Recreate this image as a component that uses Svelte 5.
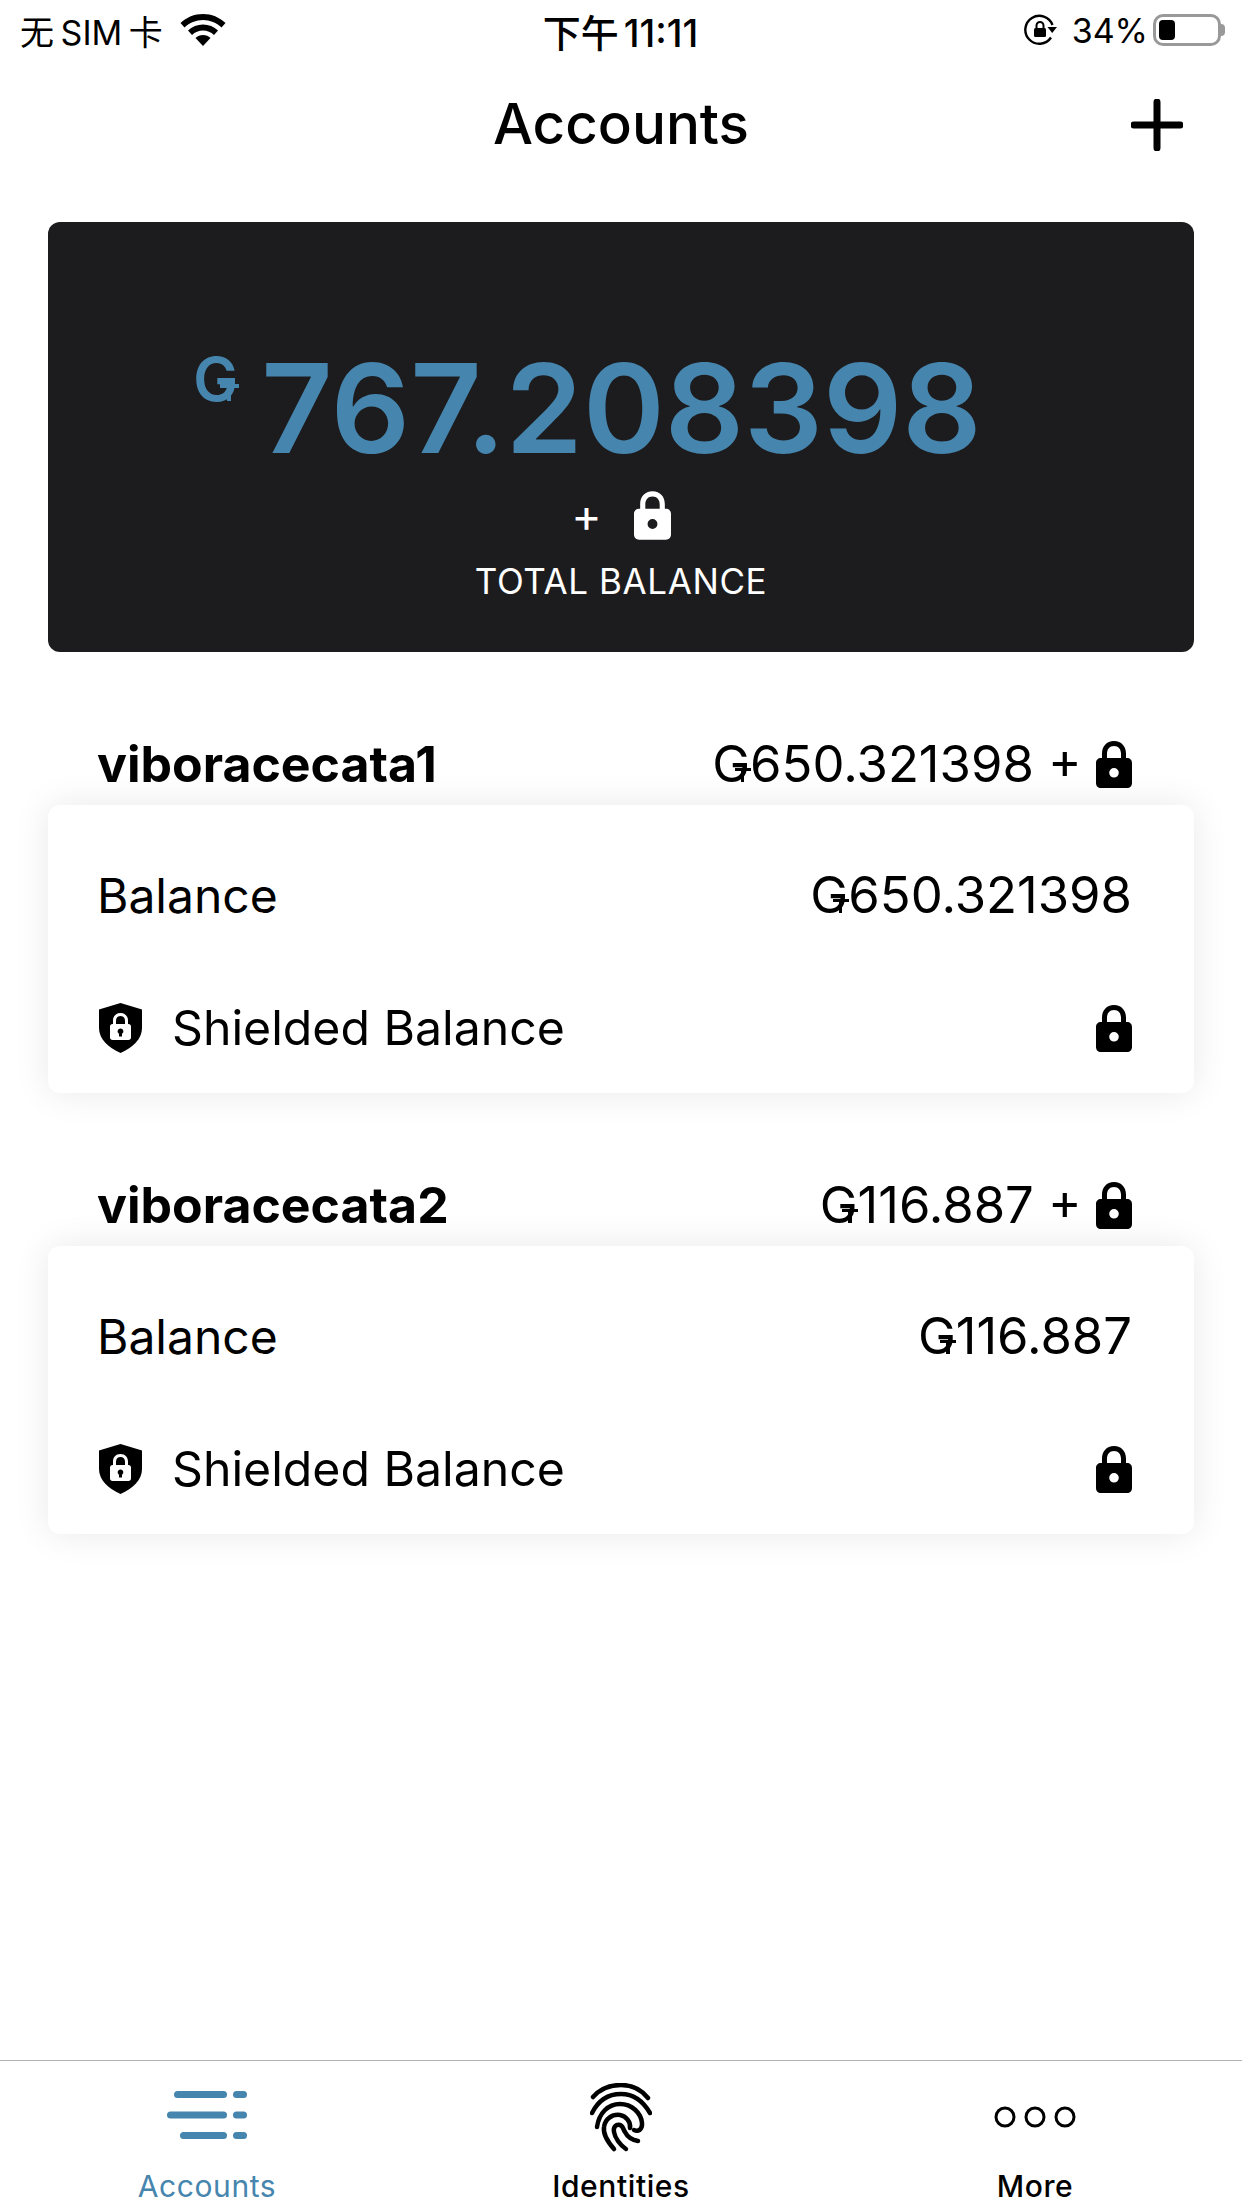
<script lang="ts">
  const accounts = [
    { name: 'viboracecata1', balance: '650.321398' },
    { name: 'viboracecata2', balance: '116.887' }
  ]
  const tabs = ['Accounts', 'Identities', 'More']
</script>

{#snippet gtu()}<span class="gtu">G</span>{/snippet}

{#snippet lock(cls: string)}
  <svg class={cls} viewBox="0 0 36 47" fill="currentColor">
    <path fill-rule="evenodd" d="M18 0C10.5 0 6 5.5 6 12.5V17H5C2 17 0 19 0 22V42C0 45 2 47 5 47H31C34 47 36 45 36 42V22C36 19 34 17 31 17H30V12.500C30 5.500 25.500 0 18 0ZM18 5C22.500 5 25 8.200 25 12.800V17H11V12.800C11 8.200 13.500 5 18 5ZM18 27A4.800 4.800 0 1 1 18 36.600A4.800 4.800 0 1 1 18 27Z" />
  </svg>
{/snippet}

<div class="screen">
  <header class="status">
    <div class="status-left">
      <span class="carrier">无 SIM 卡</span>
      <svg class="wifi" viewBox="0 0 46 32" fill="#000">
        <path d="M23 0C14.500 0 6.500 3.300 0.500 9L4.500 13.500C9.500 8.800 16 6 23 6S36.500 8.800 41.500 13.500L45.500 9C39.500 3.300 31.500 0 23 0Z" />
        <path d="M23 10.500C17.300 10.500 12 12.700 8 16.500L12 21C15 18.200 18.800 16.500 23 16.500S31 18.200 34 21L38 16.500C34 12.700 28.700 10.500 23 10.500Z" />
        <path d="M23 21C20 21 17.500 22.100 15.500 24L23 32L30.500 24C28.500 22.100 26 21 23 21Z" />
      </svg>
    </div>
    <span class="time">下午 11:11</span>
    <div class="status-right">
      <svg class="rotation" viewBox="0 0 33 32">
        <path d="M27 23.500A14 14 0 1 1 28.500 11" fill="none" stroke="#000" stroke-width="2.400" />
        <path d="M23.500 13H33L28.200 19Z" fill="#000" />
        <rect x="10" y="14" width="12" height="9" rx="1.500" fill="#000" />
        <path d="M12.500 14V11.500A3.500 3.500 0 0 1 19.500 11.500V14" fill="none" stroke="#000" stroke-width="2" />
      </svg>
      <span class="percent">34%</span>
      <div class="battery"><div class="battery-fill"></div></div>
      <div class="battery-nub"></div>
    </div>
  </header>

  <nav class="navbar">
    <h1>Accounts</h1>
    <svg class="add" viewBox="0 0 52 52">
      <path d="M26 3V49M3 26H49" stroke="#000" stroke-width="7" stroke-linecap="round" />
    </svg>
  </nav>

  <section class="hero">
    <div class="total">
      <span class="total-symbol">{@render gtu()}</span>
      <span class="total-value">767.208398</span>
    </div>
    <div class="shielded-total">
      <span>+</span>
      {@render lock('lock-hero')}
    </div>
    <div class="total-label">TOTAL BALANCE</div>
  </section>

  {#each accounts as account}
    <section class="account">
      <div class="account-head">
        <span class="account-name">{account.name}</span>
        <span class="account-sum">{@render gtu()}{account.balance} + {@render lock('lock-row')}</span>
      </div>
      <div class="card">
        <div class="row">
          <span>Balance</span>
          <span class="row-value">{@render gtu()}{account.balance}</span>
        </div>
        <div class="row">
          <span class="row-label">
            <svg class="shield" viewBox="0 0 43 50">
              <path fill="#000" d="M21.500 0L43 6.500V25C43 36 34 44.500 21.500 50C9 44.500 0 36 0 25V6.500Z" />
              <path fill="#fff" fill-rule="evenodd" d="M21.500 10C16.800 10 14 13.300 14 17.500V21H13.500C12 21 11 22 11 23.500V34.500C11 36 12 37 13.500 37H29.500C31 37 32 36 32 34.500V23.500C32 22 31 21 29.500 21H29V17.500C29 13.300 26.200 10 21.500 10ZM21.500 13C24.300 13 26 14.900 26 17.700V21H17V17.700C17 14.900 18.700 13 21.500 13ZM21.500 25.500A2.800 2.800 0 0 1 23 30.700V33.500H20V30.700A2.800 2.800 0 0 1 21.500 25.500Z" />
            </svg>
            <span class="row-text">Shielded Balance</span>
          </span>
          {@render lock('lock-row')}
        </div>
      </div>
    </section>
  {/each}

  <footer class="tabbar">
    {#each tabs as tab, i}
      <div class="tab" class:active={i === 0}>
        <div class="tab-icon">
          {#if i === 0}
            <svg class="ic-accounts" viewBox="0 0 80 49" fill="#4585ae">
              <rect x="7" y="0" width="53" height="7" rx="3.500" />
              <rect x="0" y="20.500" width="60" height="7" rx="3.500" />
              <rect x="13" y="41" width="47" height="7" rx="3.500" />
              <rect x="66" y="0" width="14" height="7" rx="3.500" />
              <rect x="66" y="20.500" width="14" height="7" rx="3.500" />
              <rect x="66" y="41" width="14" height="7" rx="3.500" />
            </svg>
          {:else if i === 1}
            <svg class="ic-finger" viewBox="0 0 62 70" fill="none" stroke="#000" stroke-width="4.500" stroke-linecap="round">
              <path d="M3 14C10 6 20 2 31 2S51 6 58 15" />
              <path d="M2 30C8 18 18 11 31 11S53 18 60 30" />
              <path d="M7 44C9 30 18 21 30 21C42 21 51 30 52 40C52.500 47 48 49 44 47" />
              <path d="M24 66C17 58 13 50 14 44C15 36 22 31 30 32C36 33 41 39 40 45" />
              <path d="M36 66C30 62 25 55 24 49C23 44 26 41 30 42C33 43 33 46 35 49C37 53 42 57 48 58" />
            </svg>
          {:else}
            <svg class="ic-more" viewBox="0 0 82 22" fill="none" stroke="#000" stroke-width="3">
              <circle cx="11" cy="11" r="9" /><circle cx="41" cy="11" r="9" /><circle cx="71" cy="11" r="9" />
            </svg>
          {/if}
        </div>
        <span class="tab-label">{tab}</span>
      </div>
    {/each}
  </footer>
</div>

<style>
  :global(body) {
    margin: 0;
    background: #fff;
  }

  .screen {
    width: 1242px;
    height: 2208px;
    display: flex;
    flex-direction: column;
    background: #fff;
    color: #000;
    font-family: Inter, "Noto Sans CJK SC", sans-serif;
    overflow: hidden;
  }

  .status {
    height: 60px;
    flex: none;
    display: grid;
    grid-template-columns: 1fr auto 1fr;
    align-items: center;
    font-size: 34px;
    padding: 0 17px 0 20px;
  }

  .status-left {
    display: flex;
    align-items: center;
    gap: 17px;
  }

  .carrier {
    word-spacing: -3px;
  }

  .wifi {
    width: 46px;
    height: 32px;
  }

  .time {
    font-size: 38px;
    font-weight: 500;
    word-spacing: -5px;
    margin-left: -4px;
  }

  .status-right {
    display: flex;
    align-items: center;
    justify-content: flex-end;
  }

  .rotation {
    width: 33px;
    height: 32px;
    margin-right: 15px;
  }

  .percent {
    margin-right: 5px;
  }

  .battery {
    width: 68px;
    height: 32px;
    box-sizing: border-box;
    border: 3px solid #999;
    border-radius: 10px;
    padding: 3px;
  }

  .battery-fill {
    width: 16px;
    height: 100%;
    background: #000;
    border-radius: 4px;
  }

  .battery-nub {
    width: 4px;
    height: 12px;
    background: #999;
    border-radius: 0 4px 4px 0;
  }

  .navbar {
    height: 162px;
    flex: none;
    position: relative;
    display: flex;
    align-items: center;
    justify-content: center;
    padding-bottom: 36px;
    box-sizing: border-box;
  }

  h1 {
    margin: 0;
    font-size: 56.5px;
    font-weight: 500;
  }

  .add {
    position: absolute;
    left: 1131px;
    top: 39px;
    width: 52px;
    height: 52px;
  }

  .hero {
    height: 430px;
    flex: none;
    margin: 0 48px;
    background: #1c1c1e;
    border-radius: 12px;
    display: flex;
    flex-direction: column;
    align-items: center;
    color: #fff;
    box-sizing: border-box;
    padding-top: 113px;
  }

  .total {
    display: flex;
    align-items: flex-start;
    color: #4585ae;
    line-height: 1;
    height: 146px;
    margin-right: 67px;
  }

  .total-symbol {
    font-size: 60px;
    font-weight: 600;
    margin-right: 23px;
    margin-top: 8px;
    line-height: 68px;
  }

  .total-value {
    font-size: 124px;
    font-weight: 600;
    line-height: 146px;
  }

  .shielded-total {
    display: flex;
    align-items: center;
    gap: 32px;
    height: 50px;
    font-size: 46px;
    margin-top: 9px;
  }

  .lock-hero {
    width: 37px;
    height: 49px;
  }

  .total-label {
    font-size: 35px;
    margin-top: 20px;
    letter-spacing: 0.6px;
  }

  .account {
    flex: none;
    margin-top: 73px;
  }

  .account-head {
    height: 78px;
    padding: 0 110px 2px 97px;
    display: flex;
    align-items: center;
    justify-content: space-between;
    font-size: 50.8px;
  }

  .account-name {
    font-size: 50px;
    font-weight: 700;
  }

  .account-sum {
    display: flex;
    align-items: center;
    white-space: pre;
  }

  .lock-row {
    width: 36px;
    height: 47px;
    flex: none;
    margin-top: 2px;
  }

  .card {
    margin: 0 48px;
    height: 288px;
    box-sizing: border-box;
    padding: 24px 62px 0 49px;
    background: #fff;
    border-radius: 12px;
    box-shadow: 0 0 36px rgba(0, 0, 0, 0.09);
    font-size: 48px;
  }

  .row {
    height: 132px;
    display: flex;
    align-items: center;
    justify-content: space-between;
  }

  .row-value {
    font-size: 50.8px;
  }

  .row-label {
    display: flex;
    align-items: center;
    gap: 30px;
  }

  .row-text {
    font-size: 48.2px;
  }

  .shield {
    width: 43px;
    height: 50px;
    margin-left: 2px;
    margin-top: 2px;
  }

  .gtu {
    position: relative;
    display: inline-block;
    line-height: 1.21;
  }

  .gtu::before {
    content: '';
    position: absolute;
    left: 0.44em;
    width: 0.32em;
    top: 0.68em;
    height: 0.07em;
    background: currentColor;
  }

  .gtu::after {
    content: '';
    position: absolute;
    left: 0.56em;
    top: 0.68em;
    height: 0.28em;
    width: 0.07em;
    background: currentColor;
  }

  .tabbar {
    margin-top: auto;
    height: 147px;
    flex: none;
    display: grid;
    grid-template-columns: repeat(3, 1fr);
    border-top: 1px solid #b2b2b2;
  }

  .tab {
    display: flex;
    flex-direction: column;
    align-items: center;
    font-size: 30px;
    font-weight: 500;
    letter-spacing: 0.6px;
  }

  .tab.active {
    color: #4585ae;
    font-weight: 400;
  }

  .tab-icon {
    height: 107px;
    display: flex;
    align-items: center;
    justify-content: center;
    width: 100%;
  }

  .tab-label {
    line-height: 36px;
  }

  .ic-accounts {
    width: 80px;
    height: 49px;
    margin-top: 1px;
  }

  .ic-finger {
    width: 62px;
    height: 70px;
    margin-top: 7px;
  }

  .ic-more {
    width: 82px;
    height: 22px;
    margin-top: 5px;
  }
</style>
